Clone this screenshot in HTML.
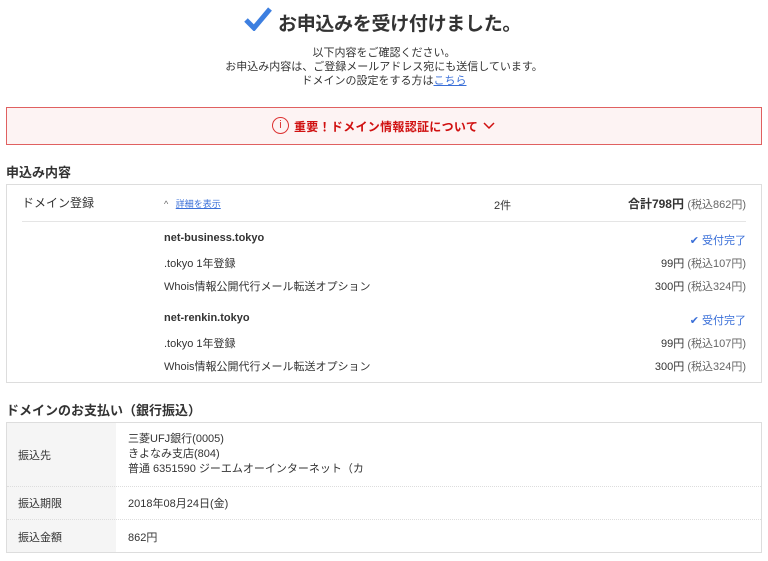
<!DOCTYPE html>
<html><head><meta charset="utf-8"><style>
body{margin:0;width:768px;height:561px;background:#fff;font-family:"Liberation Sans","Noto Sans CJK JP",sans-serif;color:#333;position:relative;overflow:hidden}
.a{position:absolute;white-space:nowrap}
.s{font-size:11px}
.r{text-align:right}
</style></head><body>
<svg class="a" style="left:244px;top:7px" width="28" height="24" viewBox="0 0 28 24"><path d="M2 13 L10 21 L26 2" fill="none" stroke="#3d7fe0" stroke-width="5" stroke-linejoin="miter"/></svg>
<div class="a" style="left:278px;top:9px;font-size:19px;font-weight:bold;color:#333;letter-spacing:-0.3px">お申込みを受け付けました。</div>
<div class="a s" style="left:0;width:768px;text-align:center;top:46px;line-height:14px">以下内容をご確認ください。<br>お申込み内容は、ご登録メールアドレス宛にも送信しています。<br>ドメインの設定をする方は<span style="color:#3a6fd8;text-decoration:underline">こちら</span></div>
<div class="a" style="left:6px;top:107px;width:754px;height:36px;background:#fdf3f3;border:1px solid #e06060"></div>
<div class="a" style="left:272px;top:117px;width:15px;height:15px;border:1px solid #d33;border-radius:50%;color:#d33;font-size:11px;text-align:center;line-height:15px">i</div>
<div class="a" style="left:294px;top:118px;font-size:12px;font-weight:bold;color:#d01010;letter-spacing:0.3px">重要！ドメイン情報認証について</div>
<svg class="a" style="left:483px;top:121px" width="12" height="10"><path d="M1 2 L6 7 L11 2" fill="none" stroke="#d01010" stroke-width="1.5"/></svg>
<div class="a" style="left:6px;top:162px;font-size:13px;font-weight:bold">申込み内容</div>
<div class="a" style="left:6px;top:184px;width:754px;height:197px;border:1px solid #ddd"></div>
<div class="a" style="left:22px;top:194px;font-size:12px">ドメイン登録</div>
<div class="a" style="left:164px;top:197px;font-size:9px;color:#3a6fd8"><span style="color:#666">^</span>&nbsp;&nbsp; <u>詳細を表示</u></div>
<div class="a s" style="left:494px;top:197px">2件</div>
<div class="a r" style="right:22px;top:195px;font-size:12px"><b>合計798円</b> <span style="color:#666;font-size:11px">(税込862円)</span></div>
<div class="a" style="left:22px;top:221px;width:724px;height:1px;background:#e5e5e5"></div>
<div class="a s" style="left:164px;top:232px;font-weight:bold">net-business.tokyo</div>
<div class="a s r" style="right:22px;top:232px;color:#3a6fd8">✔ 受付完了</div>
<div class="a s" style="left:164px;top:255px">.tokyo 1年登録</div>
<div class="a s r" style="right:22px;top:255px">99円 <span style="color:#666">(税込107円)</span></div>
<div class="a s" style="left:164px;top:278px">Whois情報公開代行メール転送オプション</div>
<div class="a s r" style="right:22px;top:278px">300円 <span style="color:#666">(税込324円)</span></div>
<div class="a s" style="left:164px;top:312px;font-weight:bold">net-renkin.tokyo</div>
<div class="a s r" style="right:22px;top:312px;color:#3a6fd8">✔ 受付完了</div>
<div class="a s" style="left:164px;top:335px">.tokyo 1年登録</div>
<div class="a s r" style="right:22px;top:335px">99円 <span style="color:#666">(税込107円)</span></div>
<div class="a s" style="left:164px;top:358px">Whois情報公開代行メール転送オプション</div>
<div class="a s r" style="right:22px;top:358px">300円 <span style="color:#666">(税込324円)</span></div>
<div class="a" style="left:6px;top:400px;font-size:13px;font-weight:bold">ドメインのお支払い（銀行振込）</div>
<div class="a" style="left:6px;top:422px;width:754px;height:129px;border:1px solid #ddd"></div>
<div class="a" style="left:7px;top:423px;width:109px;height:129px;background:#f5f5f5"></div>
<div class="a" style="left:7px;top:486px;width:754px;height:0;border-top:1px dotted #ddd"></div>
<div class="a" style="left:7px;top:519px;width:754px;height:0;border-top:1px dotted #ddd"></div>
<div class="a s" style="left:18px;top:447px">振込先</div>
<div class="a s" style="left:128px;top:432px;line-height:15px">三菱UFJ銀行(0005)<br>きよなみ支店(804)<br>普通 6351590 ジーエムオーインターネット（カ</div>
<div class="a s" style="left:18px;top:495px">振込期限</div>
<div class="a s" style="left:128px;top:495px">2018年08月24日(金)</div>
<div class="a s" style="left:18px;top:529px">振込金額</div>
<div class="a s" style="left:128px;top:529px">862円</div>
</body></html>
